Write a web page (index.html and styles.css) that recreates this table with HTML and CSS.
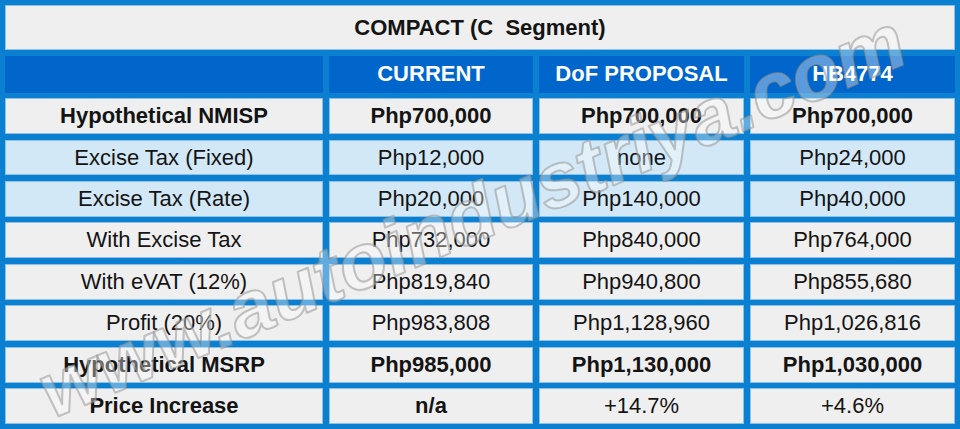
FILE: index.html
```html
<!DOCTYPE html>
<html>
<head>
<meta charset="utf-8">
<link rel="stylesheet" href="styles.css">
</head>
<body>
<div class="page">
  <div class="table">
    <div class="cell title">COMPACT (C&nbsp; Segment)</div>

    <div class="cell head"></div>
    <div class="cell head">CURRENT</div>
    <div class="cell head">DoF PROPOSAL</div>
    <div class="cell head">HB4774</div>

    <div class="cell b">Hypothetical NMISP</div>
    <div class="cell b">Php700,000</div>
    <div class="cell b">Php700,000</div>
    <div class="cell b">Php700,000</div>

    <div class="cell alt">Excise Tax (Fixed)</div>
    <div class="cell alt">Php12,000</div>
    <div class="cell alt">none</div>
    <div class="cell alt">Php24,000</div>

    <div class="cell alt">Excise Tax (Rate)</div>
    <div class="cell alt">Php20,000</div>
    <div class="cell alt">Php140,000</div>
    <div class="cell alt">Php40,000</div>

    <div class="cell">With Excise Tax</div>
    <div class="cell">Php732,000</div>
    <div class="cell">Php840,000</div>
    <div class="cell">Php764,000</div>

    <div class="cell">With eVAT (12%)</div>
    <div class="cell">Php819,840</div>
    <div class="cell">Php940,800</div>
    <div class="cell">Php855,680</div>

    <div class="cell">Profit (20%)</div>
    <div class="cell">Php983,808</div>
    <div class="cell">Php1,128,960</div>
    <div class="cell">Php1,026,816</div>

    <div class="cell b">Hypothetical MSRP</div>
    <div class="cell b">Php985,000</div>
    <div class="cell b">Php1,130,000</div>
    <div class="cell b">Php1,030,000</div>

    <div class="cell b">Price Increase</div>
    <div class="cell b">n/a</div>
    <div class="cell">+14.7%</div>
    <div class="cell">+4.6%</div>
  </div>

  <svg class="watermark" width="960" height="429" viewBox="0 0 960 429">
    <text x="0" y="0" transform="translate(482 240) rotate(-22.6)" text-anchor="middle" textLength="930" lengthAdjust="spacingAndGlyphs">www.autoindustriya.com</text>
  </svg>
</div>
</body>
</html>
```

FILE: styles.css
```css
html, body {
  margin: 0;
  padding: 0;
  background: #0b80d0;
}

.page {
  position: relative;
  width: 960px;
  height: 429px;
  overflow: hidden;
}

.table {
  box-sizing: border-box;
  width: 960px;
  height: 429px;
  padding: 5px;
  background: #0b80d0;
  display: grid;
  grid-template-columns: 318px 204px 205px 205px;
  grid-template-rows: 45px 37px repeat(8, 1fr);
  column-gap: 6px;
  row-gap: 5.6px;
  font-family: "Liberation Sans", Arial, sans-serif;
  font-size: 22px;
  color: #141414;
}

.cell {
  box-sizing: border-box;
  display: flex;
  align-items: center;
  justify-content: center;
  background: #efefef;
  border: 1px solid #8cc2ea;
  white-space: nowrap;
}

.title {
  grid-column: 1 / span 4;
  font-weight: bold;
}

.head {
  background: #0066cc;
  border-color: #0066cc;
  color: #ffffff;
  font-weight: bold;
}

.alt {
  background: #d3e8f6;
}

.b {
  font-weight: bold;
}

.watermark {
  position: absolute;
  left: 0;
  top: 0;
  pointer-events: none;
}

.watermark text {
  font-family: "Liberation Sans", Arial, sans-serif;
  font-weight: bold;
  font-style: italic;
  font-size: 78px;
  fill: rgba(255, 255, 255, 0.35);
  stroke: rgba(150, 150, 150, 0.55);
  stroke-width: 2px;
  stroke-linejoin: round;
}
```
